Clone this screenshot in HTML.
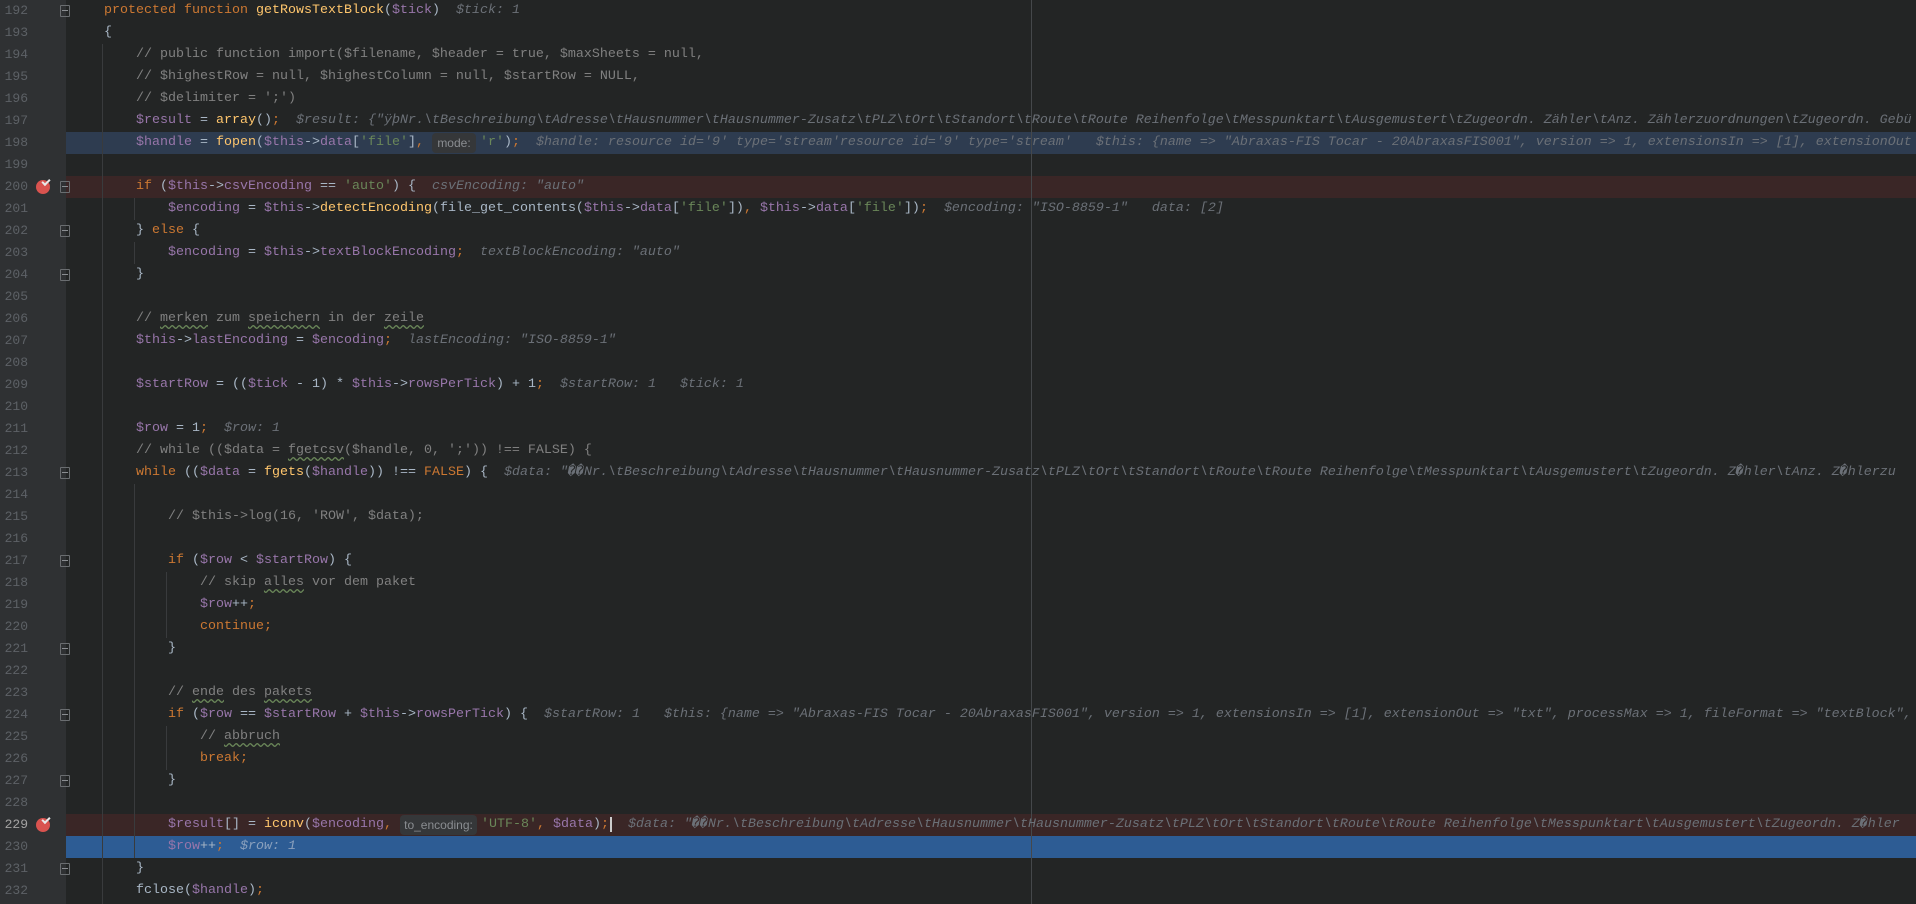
<!DOCTYPE html>
<html><head><meta charset="utf-8"><style>
html,body{margin:0;padding:0;width:1916px;height:904px;overflow:hidden;background:#232525;}
.g{position:absolute;left:0;top:0;width:66px;height:904px;background:#2f3133;}
.l{position:absolute;left:0;width:1916px;height:22px;line-height:22px;font-family:"Liberation Mono",monospace;font-size:13.33px;white-space:pre;color:#a9b7c6;}
.n{position:absolute;left:0;width:28px;text-align:right;color:#5d6166;font-size:13px;}
.c{position:absolute;left:104px;}
.k{color:#cc7832}.f{color:#ffc66d}.v{color:#9876aa}.s{color:#6a8759}.m{color:#808080}
.h{color:#6b7077;font-style:italic}
.ih{display:inline-block;height:20px;line-height:20px;vertical-align:top;margin-top:1px;background:#353739;border-radius:4px;color:#8a8d91;font-family:"Liberation Sans",sans-serif;font-size:12px;text-align:center;margin-right:4px;letter-spacing:0}
.bp{position:absolute;left:36px;top:4px;width:14px;height:14px;border-radius:50%;background:#d9534f;}
.bp:after{content:"";position:absolute;left:6px;top:-1px;width:6px;height:3px;border-left:2px solid #e8e8e8;border-bottom:2px solid #e8e8e8;transform:rotate(-45deg);}
.fd{position:absolute;left:60px;top:5px;width:8px;height:10px;border:1px solid #6a6d70;border-radius:1px;}
.fd:after{content:"";position:absolute;left:1px;top:4px;width:6px;height:1px;background:#8a8d91;}
.gd{position:absolute;width:1px;background:#393b3d;}
u{text-decoration:underline wavy #6a8759;text-underline-offset:3px}
</style></head><body>
<div class="l" style="top:132px;background:#2e3c50"></div>
<div class="l" style="top:176px;background:#3a2626"></div>
<div class="l" style="top:814px;background:#3a2626"></div>
<div class="l" style="top:836px;background:#2d5c94"></div>
<div class="g"></div>
<div class="gd" style="left:102px;top:44px;height:860px"></div>
<div class="gd" style="left:134px;top:198px;height:22px"></div>
<div class="gd" style="left:134px;top:242px;height:22px"></div>
<div class="gd" style="left:134px;top:484px;height:374px"></div>
<div class="gd" style="left:166px;top:572px;height:66px"></div>
<div class="gd" style="left:166px;top:726px;height:44px"></div>
<div style="position:absolute;left:1031px;top:0;width:1px;height:904px;background:#45484b"></div>

<div class="l" style="top:0"><span class="n">192</span><span class="fd"></span><span class="c"><span class="k">protected function </span><span class="f">getRowsTextBlock</span>(<span class="v">$tick</span>)  <span class="h">$tick: 1</span></span></div>
<div class="l" style="top:22px"><span class="n">193</span><span class="c">{</span></div>
<div class="l" style="top:44px"><span class="n">194</span><span class="c m">    // public function import($filename, $header = true, $maxSheets = null,</span></div>
<div class="l" style="top:66px"><span class="n">195</span><span class="c m">    // $highestRow = null, $highestColumn = null, $startRow = NULL,</span></div>
<div class="l" style="top:88px"><span class="n">196</span><span class="c m">    // $delimiter = ';')</span></div>
<div class="l" style="top:110px"><span class="n">197</span><span class="c">    <span class="v">$result</span> = <span class="f">array</span>()<span class="k">;</span>  <span class="h">$result: {"ÿþNr.\tBeschreibung\tAdresse\tHausnummer\tHausnummer-Zusatz\tPLZ\tOrt\tStandort\tRoute\tRoute Reihenfolge\tMesspunktart\tAusgemustert\tZugeordn. Zähler\tAnz. Zählerzuordnungen\tZugeordn. Gebü</span></span></div>
<div class="l" style="top:132px"><span class="n">198</span><span class="c">    <span class="v">$handle</span> = <span class="f">fopen</span>(<span class="v">$this</span>-><span class="v">data</span>[<span class="s">'file'</span>]<span class="k">,</span> <span class="ih" style="width:44px">mode:</span><span class="s">'r'</span>)<span class="k">;</span>  <span class="h">$handle: resource id='9' type='stream'resource id='9' type='stream'   $this: {name =&gt; "Abraxas-FIS Tocar - 20AbraxasFIS001", version =&gt; 1, extensionsIn =&gt; [1], extensionOut</span></span></div>
<div class="l" style="top:154px"><span class="n">199</span></div>
<div class="l" style="top:176px"><span class="n">200</span><span class="bp"></span><span class="fd"></span><span class="c">    <span class="k">if</span> (<span class="v">$this</span>-><span class="v">csvEncoding</span> == <span class="s">'auto'</span>) {  <span class="h">csvEncoding: "auto"</span></span></div>
<div class="l" style="top:198px"><span class="n">201</span><span class="c">        <span class="v">$encoding</span> = <span class="v">$this</span>-><span class="f">detectEncoding</span>(file_get_contents(<span class="v">$this</span>-><span class="v">data</span>[<span class="s">'file'</span>])<span class="k">,</span> <span class="v">$this</span>-><span class="v">data</span>[<span class="s">'file'</span>])<span class="k">;</span>  <span class="h">$encoding: "ISO-8859-1"   data: [2]</span></span></div>
<div class="l" style="top:220px"><span class="n">202</span><span class="fd"></span><span class="c">    } <span class="k">else</span> {</span></div>
<div class="l" style="top:242px"><span class="n">203</span><span class="c">        <span class="v">$encoding</span> = <span class="v">$this</span>-><span class="v">textBlockEncoding</span><span class="k">;</span>  <span class="h">textBlockEncoding: "auto"</span></span></div>
<div class="l" style="top:264px"><span class="n">204</span><span class="fd"></span><span class="c">    }</span></div>
<div class="l" style="top:286px"><span class="n">205</span></div>
<div class="l" style="top:308px"><span class="n">206</span><span class="c m">    // <u>merken</u> zum <u>speichern</u> in der <u>zeile</u></span></div>
<div class="l" style="top:330px"><span class="n">207</span><span class="c">    <span class="v">$this</span>-><span class="v">lastEncoding</span> = <span class="v">$encoding</span><span class="k">;</span>  <span class="h">lastEncoding: "ISO-8859-1"</span></span></div>
<div class="l" style="top:352px"><span class="n">208</span></div>
<div class="l" style="top:374px"><span class="n">209</span><span class="c">    <span class="v">$startRow</span> = ((<span class="v">$tick</span> - 1) * <span class="v">$this</span>-><span class="v">rowsPerTick</span>) + 1<span class="k">;</span>  <span class="h">$startRow: 1   $tick: 1</span></span></div>
<div class="l" style="top:396px"><span class="n">210</span></div>
<div class="l" style="top:418px"><span class="n">211</span><span class="c">    <span class="v">$row</span> = 1<span class="k">;</span>  <span class="h">$row: 1</span></span></div>
<div class="l" style="top:440px"><span class="n">212</span><span class="c m">    // while (($data = <u>fgetcsv</u>($handle, 0, ';')) !== FALSE) {</span></div>
<div class="l" style="top:462px"><span class="n">213</span><span class="fd"></span><span class="c">    <span class="k">while</span> ((<span class="v">$data</span> = <span class="f">fgets</span>(<span class="v">$handle</span>)) !== <span class="k">FALSE</span>) {  <span class="h">$data: "��Nr.\tBeschreibung\tAdresse\tHausnummer\tHausnummer-Zusatz\tPLZ\tOrt\tStandort\tRoute\tRoute Reihenfolge\tMesspunktart\tAusgemustert\tZugeordn. Z�hler\tAnz. Z�hlerzu</span></span></div>
<div class="l" style="top:484px"><span class="n">214</span></div>
<div class="l" style="top:506px"><span class="n">215</span><span class="c m">        // $this->log(16, 'ROW', $data);</span></div>
<div class="l" style="top:528px"><span class="n">216</span></div>
<div class="l" style="top:550px"><span class="n">217</span><span class="fd"></span><span class="c">        <span class="k">if</span> (<span class="v">$row</span> &lt; <span class="v">$startRow</span>) {</span></div>
<div class="l" style="top:572px"><span class="n">218</span><span class="c m">            // skip <u>alles</u> vor dem paket</span></div>
<div class="l" style="top:594px"><span class="n">219</span><span class="c">            <span class="v">$row</span>++<span class="k">;</span></span></div>
<div class="l" style="top:616px"><span class="n">220</span><span class="c">            <span class="k">continue;</span></span></div>
<div class="l" style="top:638px"><span class="n">221</span><span class="fd"></span><span class="c">        }</span></div>
<div class="l" style="top:660px"><span class="n">222</span></div>
<div class="l" style="top:682px"><span class="n">223</span><span class="c m">        // <u>ende</u> des <u>pakets</u></span></div>
<div class="l" style="top:704px"><span class="n">224</span><span class="fd"></span><span class="c">        <span class="k">if</span> (<span class="v">$row</span> == <span class="v">$startRow</span> + <span class="v">$this</span>-><span class="v">rowsPerTick</span>) {  <span class="h">$startRow: 1   $this: {name =&gt; "Abraxas-FIS Tocar - 20AbraxasFIS001", version =&gt; 1, extensionsIn =&gt; [1], extensionOut =&gt; "txt", processMax =&gt; 1, fileFormat =&gt; "textBlock",</span></span></div>
<div class="l" style="top:726px"><span class="n">225</span><span class="c m">            // <u>abbruch</u></span></div>
<div class="l" style="top:748px"><span class="n">226</span><span class="c">            <span class="k">break;</span></span></div>
<div class="l" style="top:770px"><span class="n">227</span><span class="fd"></span><span class="c">        }</span></div>
<div class="l" style="top:792px"><span class="n">228</span></div>
<div class="l" style="top:814px"><span class="n" style="color:#a4a3a3">229</span><span class="bp"></span><span class="c">        <span class="v">$result</span>[] = <span class="f">iconv</span>(<span class="v">$encoding</span><span class="k">,</span> <span class="ih" style="width:77px">to_encoding:</span><span class="s">'UTF-8'</span><span class="k">,</span> <span class="v">$data</span>)<span class="k">;</span><span style="border-left:2px solid #ccc;margin-left:1px"></span>  <span class="h">$data: "��Nr.\tBeschreibung\tAdresse\tHausnummer\tHausnummer-Zusatz\tPLZ\tOrt\tStandort\tRoute\tRoute Reihenfolge\tMesspunktart\tAusgemustert\tZugeordn. Z�hler</span></span></div>
<div class="l" style="top:836px"><span class="n">230</span><span class="c">        <span class="v">$row</span>++<span class="k">;</span>  <span class="h" style="color:#8aa0bd">$row: 1</span></span></div>
<div class="l" style="top:858px"><span class="n">231</span><span class="fd"></span><span class="c">    }</span></div>
<div class="l" style="top:880px"><span class="n">232</span><span class="c">    fclose(<span class="v">$handle</span>)<span class="k">;</span></span></div>
</body></html>
